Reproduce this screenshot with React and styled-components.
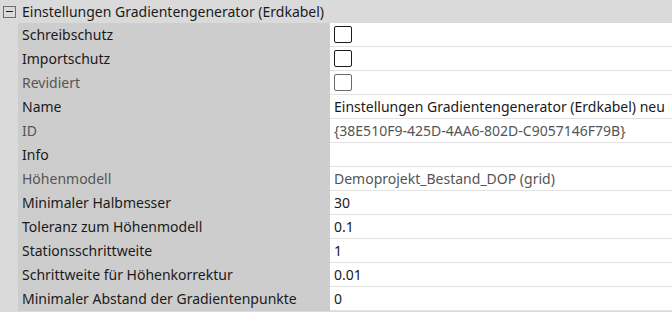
import React from 'react'
import styled, { createGlobalStyle } from 'styled-components'

const GlobalStyle = createGlobalStyle`
  html, body {
    margin: 0;
    padding: 0;
    background: #dadada;
  }
  body {
    font-family: "Noto Sans", "Open Sans", sans-serif;
    font-size: 14px;
  }
`

const Grid = styled.div`
  width: 672px;
  height: 312px;
  background: #dadada;
  overflow: hidden;
`

const CategoryRow = styled.div`
  display: flex;
  align-items: center;
  height: 23px;
  color: #1a1a1a;
  line-height: 1;
`

const ToggleBox = styled.span`
  box-sizing: border-box;
  width: 13px;
  height: 12px;
  margin: 0 6px 0 3px;
  border: 1px solid #6e6e6e;
  display: flex;
  align-items: center;
  justify-content: center;
  &::after {
    content: '';
    width: 7px;
    height: 1.5px;
    background: #222;
  }
`

const Rows = styled.div`
  margin-left: 18px;
  display: grid;
  grid-template-columns: 312px 1fr;
`

const Label = styled.div`
  height: 24px;
  box-sizing: border-box;
  padding-left: 4px;
  padding-bottom: 1px;
  display: flex;
  align-items: center;
  background: #cdcdcd;
  color: ${p => (p.$dim ? '#555555' : '#1a1a1a')};
  white-space: nowrap;
`

const Value = styled.div`
  height: 24px;
  box-sizing: border-box;
  padding-left: 4px;
  display: flex;
  align-items: center;
  background: #fff;
  border-bottom: 1px solid #e3e3e3;
  color: ${p => (p.$dim ? '#555555' : '#1a1a1a')};
  white-space: nowrap;
  overflow: hidden;
`

const Check = styled.span`
  box-sizing: border-box;
  width: 18px;
  height: 17px;
  border: 1.5px solid ${p => (p.$dim ? '#6a6a6a' : '#1a1a1a')};
  border-radius: 2px;
  background: #fff;
`

const props = [
  { label: 'Schreibschutz', check: true },
  { label: 'Importschutz', check: true },
  { label: 'Revidiert', check: true, dim: true },
  { label: 'Name', value: 'Einstellungen Gradientengenerator (Erdkabel) neu' },
  { label: 'ID', value: '{38E510F9-425D-4AA6-802D-C9057146F79B}', dim: true },
  { label: 'Info', value: '' },
  { label: 'Höhenmodell', value: 'Demoprojekt_Bestand_DOP (grid)', dim: true },
  { label: 'Minimaler Halbmesser', value: '30' },
  { label: 'Toleranz zum Höhenmodell', value: '0.1' },
  { label: 'Stationsschrittweite', value: '1' },
  { label: 'Schrittweite für Höhenkorrektur', value: '0.01' },
  { label: 'Minimaler Abstand der Gradientenpunkte', value: '0' },
]

const App = () => {
  return (
    <Grid>
      <GlobalStyle />
      <CategoryRow>
        <ToggleBox />
        Einstellungen Gradientengenerator (Erdkabel)
      </CategoryRow>
      <Rows>
        {props.map((p, index) => (
          <React.Fragment key={index}>
            <Label $dim={p.dim}>{p.label}</Label>
            <Value $dim={p.dim}>
              {p.check ? <Check $dim={p.dim} /> : p.value}
            </Value>
          </React.Fragment>
        ))}
      </Rows>
    </Grid>
  )
}

export default App
